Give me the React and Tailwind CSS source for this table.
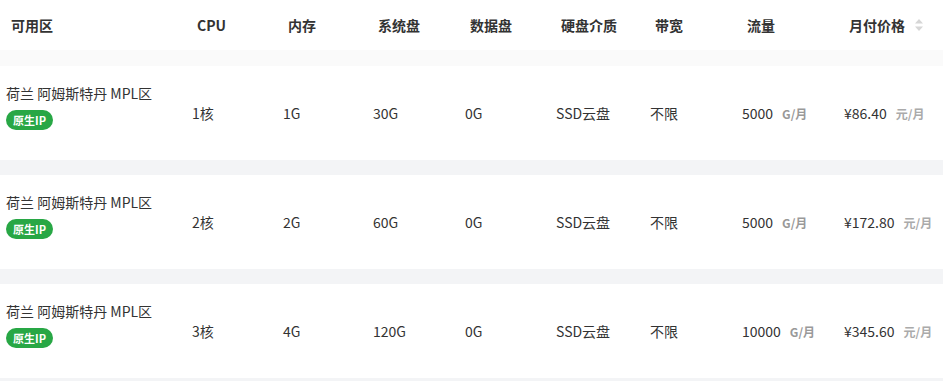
import React from 'react';

const rows = [
  { cpu: '1核', mem: '1G', sys: '30G', data: '0G', flow: '5000', price: '¥86.40' },
  { cpu: '2核', mem: '2G', sys: '60G', data: '0G', flow: '5000', price: '¥172.80' },
  { cpu: '3核', mem: '4G', sys: '120G', data: '0G', flow: '10000', price: '¥345.60' },
];

const headers = ['可用区', 'CPU', '内存', '系统盘', '数据盘', '硬盘介质', '带宽', '流量', '月付价格'];

const cols = 'grid grid-cols-[186px_91px_90px_92px_91px_94px_92px_102px_1fr]';

const SortIcon = () => (
  <svg width="10" height="16" viewBox="0 0 10 16" className="ml-[9px]">
    <path d="M5 2 L9 6.5 L1 6.5 Z" fill="#d6d6d6" />
    <path d="M5 14 L9 9.5 L1 9.5 Z" fill="#d6d6d6" />
  </svg>
);

const App = () => {
  return (
    <div
      className="w-[943px] h-[381px] overflow-hidden bg-[#f3f4f6] text-[#333] text-[14px]"
      style={{ fontFamily: '"Noto Sans CJK SC", "Noto Sans", sans-serif' }}
    >
      {/* Header */}
      <div className={`${cols} h-[50px] bg-white items-center font-bold`}>
        {headers.map((h, i) => (
          <div key={i} className="pl-[11px] flex items-center">
            <span>{h}</span>
            {i === headers.length - 1 && <SortIcon />}
          </div>
        ))}
      </div>
      <div className="h-4 bg-[#fafafa]"></div>

      {rows.map((r, i) => (
        <div key={i}>
          {i > 0 && <div className="h-[15px] bg-[#f3f4f6]"></div>}
          <div className={`${cols} h-[94px] bg-white items-center`}>
            <div className="pl-[6px] self-start pt-[18px]">
              <div className="leading-[18px] whitespace-nowrap">荷兰 阿姆斯特丹 MPL区</div>
              <div className="mt-[8px] inline-flex items-center h-[20px] px-[7px] rounded-full bg-[#28a745] text-white text-[11px] font-bold">
                原生IP
              </div>
            </div>
            <div className="pl-[6px]">{r.cpu}</div>
            <div className="pl-[6px]">{r.mem}</div>
            <div className="pl-[6px]">{r.sys}</div>
            <div className="pl-[6px]">{r.data}</div>
            <div className="pl-[6px]">SSD云盘</div>
            <div className="pl-[6px]">不限</div>
            <div className="pl-[6px] flex items-baseline">
              <span>{r.flow}</span>
              <span className="ml-[9px] text-[12px] font-bold text-[#999]">G/月</span>
            </div>
            <div className="pl-[6px] flex items-baseline">
              <span>{r.price}</span>
              <span className="ml-[9px] text-[12px] font-bold text-[#aaa]">元/月</span>
            </div>
          </div>
        </div>
      ))}
    </div>
  );
};

export default App;
